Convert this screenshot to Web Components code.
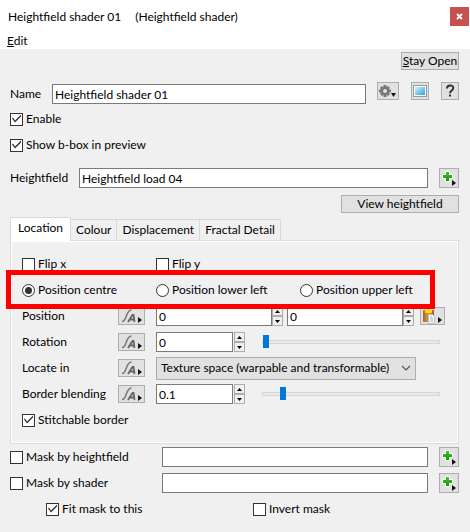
<!DOCTYPE html>
<html lang="en">
<head>
<meta charset="utf-8">
<title>Heightfield shader 01</title>
<style>
	body {
		margin: 0;
		background: #f0f0f0;
		color: #000;
		font: 12px/16px Lato, "Open Sans", sans-serif;
	}
</style>
</head>
<body>

<shader-window>
	<span slot="title">Heightfield shader 01</span>
	<span slot="type">(Heightfield shader)</span>

	<form-row class="end top"><push-button accesskey-first>Stay Open</push-button></form-row>
	<form-row class="name">
		<text-field label="Name" value="Heightfield shader 01" style="--label:42px"></text-field>
		<icon-button icon="gear" label="Options" style="--w:22px"></icon-button>
		<icon-button icon="preview" label="Preview" style="--w:18px"></icon-button>
		<icon-button icon="help" label="Help" style="--w:18px"></icon-button>
	</form-row>
	<form-row><check-box checked>Enable</check-box></form-row>
	<form-row><check-box checked>Show b-box in preview</check-box></form-row>
	<form-row class="node">
		<text-field label="Heightfield" value="Heightfield load 04" style="--label:69px"></text-field>
		<icon-button icon="plus" label="Assign heightfield" style="--w:20px;--h:20px"></icon-button>
	</form-row>
	<form-row class="end"><push-button style="--w:118px">View heightfield</push-button></form-row>

	<tab-panel tabs="Location,Colour,Displacement,Fractal Detail">
		<form-row class="cols"><check-box>Flip x</check-box><check-box>Flip y</check-box></form-row>
		<radio-row options="Position centre,Position lower left,Position upper left" selected="0"></radio-row>
		<param-row label="Position" kind="vector" value="0"></param-row>
		<param-row label="Rotation" kind="slider" value="0"></param-row>
		<param-row label="Locate in" kind="choice" value="Texture space (warpable and transformable)"></param-row>
		<param-row label="Border blending" kind="slider" value="0.1"></param-row>
		<form-row><check-box checked>Stitchable border</check-box></form-row>
	</tab-panel>

	<mask-row label="Mask by heightfield"></mask-row>
	<mask-row label="Mask by shader"></mask-row>
	<form-row class="fit"><check-box checked>Fit mask to this</check-box><check-box>Invert mask</check-box></form-row>
</shader-window>

<script>
const ARROW = '<path d="M0 0L4 3L0 6Z" fill="#111"/>';

const ICONS = {
	gear: `<svg width="20" height="16" viewBox="0 0 20 16">
		<g transform="translate(7 8)" stroke="#777" stroke-width="3">
			<path d="M0-6V6M-6 0H6M-4-4L4 4M4-4L-4 4"/>
			<circle r="3" fill="#e1e1e1" stroke-width="2"/>
		</g>
		<path d="M13 10H18L15.500 14Z" fill="#111"/></svg>`,
	preview: `<svg width="16" height="16" viewBox="0 0 16 16">
		<defs><linearGradient id="g" x1="0" y1="0" x2="1" y2="1"><stop offset="0" stop-color="#d3f1fc"/><stop offset="1" stop-color="#2da5dc"/></linearGradient></defs>
		<rect x="1.500" y="2.500" width="13" height="11" fill="#fff" stroke="#999"/>
		<rect x="3" y="4" width="10" height="8" fill="url(#g)"/></svg>`,
	help: `<svg width="16" height="16" viewBox="0 0 16 16">
		<path d="M5 5.500C5 1.500 11.300 1.500 11.300 5C11.300 7.500 8 7.500 8 10.200" fill="none" stroke="#333" stroke-width="2"/>
		<rect x="7" y="11.500" width="2" height="2" fill="#333"/></svg>`,
	plus: `<svg width="18" height="18" viewBox="0 0 18 18">
		<defs><linearGradient id="g" x1="0" y1="0" x2="0" y2="1"><stop offset="0" stop-color="#41c52c"/><stop offset="1" stop-color="#159407"/></linearGradient></defs>
		<path d="M6 3H9V6H12V9H9V12H6V9H3V6H6Z" fill="url(#g)" stroke="#fff" stroke-width="2" paint-order="stroke"/>
		<g transform="translate(12 11)">${ARROW}</g></svg>`,
	anim: `<svg width="25" height="16" viewBox="0 0 25 16">
		<path d="M3 13.500C8 13.500 6.500 2 12.500 2" fill="none" stroke="#777" stroke-width="1.500"/>
		<path d="M9 14L13.500 7H14.500L15.500 14M11 11.500H15" fill="none" stroke="#666" stroke-width="1.800"/>
		<g transform="translate(19 9)">${ARROW}</g></svg>`,
	paste: `<svg width="23" height="16" viewBox="0 0 23 16">
		<defs><linearGradient id="g" x1="0" y1="0" x2="1" y2="0"><stop offset="0" stop-color="#a76520"/><stop offset=".5" stop-color="#d99a4b"/><stop offset="1" stop-color="#9a5716"/></linearGradient></defs>
		<rect x="2" y="2" width="11" height="12" rx="1" fill="url(#g)"/>
		<path d="M4 2H6V0H9V2H11V5H4Z" fill="#fcd514"/>
		<path d="M7.500 6.500H11.500L13.500 8.500V15.500H7.500Z" fill="#fafafa" stroke="#bbb"/>
		<path d="M9 9H11M9 11H12M9 13H12" stroke="#aaa"/>
		<g transform="translate(17 9)">${ARROW}</g></svg>`
};

class BaseElement extends HTMLElement {

	constructor() {
		super();
		this.root = this.attachShadow({mode: 'open'});
	}

	connectedCallback() {
		this.root.innerHTML = `
		<style>
			:host { display: block; }
			* { box-sizing: border-box; }
			button, input, select { font: inherit; color: inherit; margin: 0; border-radius: 0; }
			${this.css()}
		</style>
		${this.html()}`;
	}

	attr(name) {
		return this.getAttribute(name) || '';
	}
}

class ShaderWindow extends BaseElement {
	css() {
		return `
		header { background: #fff; }
		.title { display: flex; align-items: center; gap: 14px; height: 33px; padding: 0 1px 0 8px; }
		.title button {
			width: 19px; height: 19px; padding: 0; margin-left: auto;
			border: 0; background: #c75050; color: #fff; display: grid; place-items: center;
		}
		nav { height: 16px; padding-left: 7px; }
		nav button { display: block; height: 16px; border: 0; padding: 0; background: none; }
		main { padding: 3px 11px 10px 10px; }`;
	}
	html() {
		return `
		<header>
			<div class="title">
				<slot name="title"></slot>
				<slot name="type"></slot>
				<button aria-label="Close"><svg width="7" height="7" viewBox="0 0 7 7"><path d="M1 1L6 6M6 1L1 6" stroke="#fff" stroke-width="1.800"/></svg></button>
			</div>
			<nav><button><u>E</u>dit</button></nav>
		</header>
		<main><slot></slot></main>`;
	}
}
customElements.define('shader-window', ShaderWindow);

class FormRow extends BaseElement {
	css() {
		return `
		:host { display: flex; align-items: center; height: 26px; }
		:host(.end) { justify-content: flex-end; align-items: flex-start; height: 22px; }
		:host(.top) { height: 30px; }
		:host(.name) { gap: 12px; height: 24px; align-items: flex-start; }
		:host(.node) { gap: 11px; height: 30px; align-items: flex-end; margin-bottom: 7px; }
		:host(.cols) { display: grid; grid-template-columns: 134px 144px 1fr; }
		:host(.fit) { display: grid; grid-template-columns: 207px 1fr; padding-left: 36px; }`;
	}
	html() {
		return '<slot></slot>';
	}
}
customElements.define('form-row', FormRow);

class PushButton extends BaseElement {
	css() {
		return `
		button {
			display: block; height: 18px; width: var(--w, 58px); padding: 0;
			border: 1px solid #adadad; background: #e1e1e1; line-height: 16px; white-space: nowrap;
		}`;
	}
	html() {
		const text = this.textContent;
		if (this.hasAttribute('accesskey-first')) {
			return `<button><u>${text[0]}</u>${text.slice(1)}</button>`;
		}
		return `<button>${text}</button>`;
	}
}
customElements.define('push-button', PushButton);

class IconButton extends BaseElement {
	css() {
		return `
		:host { flex: none; }
		button {
			display: grid; place-items: center; width: var(--w, 27px); height: var(--h, 18px);
			padding: 0; border: 1px solid #adadad; background: #e1e1e1;
		}
		svg { display: block; }`;
	}
	html() {
		return `<button aria-label="${this.attr('label')}">${ICONS[this.attr('icon')]}</button>`;
	}
}
customElements.define('icon-button', IconButton);

class TextField extends BaseElement {
	css() {
		return `
		:host { flex: 1; min-width: 0; }
		label { display: grid; grid-template-columns: var(--label) 1fr; align-items: center; }
		input { min-width: 0; height: 20px; padding: 0 2px; border: 1px solid #7a7a7a; background: #fff; }
		:host([label=Name]) { padding-top: 2px; margin-right: -1px; }`;
	}
	html() {
		return `<label>${this.attr('label')}<input type="text" value="${this.attr('value')}"></label>`;
	}
}
customElements.define('text-field', TextField);

/* shared by the tick boxes, wherever they are drawn */
const CHECK_CSS = `
	label { display: inline-flex; align-items: center; gap: 3px; white-space: nowrap; }
	input[type=checkbox] {
		appearance: none; flex: none; display: grid; place-items: center;
		width: 13px; height: 13px; border: 1px solid #333; background: #fff;
	}
	input[type=checkbox]:checked::before {
		content: ""; width: 11px; height: 11px; background: #333;
		clip-path: polygon(1px 5px, 2px 4px, 4px 7px, 10px 1px, 10px 3px, 4px 9px);
	}`;

class CheckBox extends BaseElement {
	css() {
		return CHECK_CSS + ':host { display: flex; }';
	}
	html() {
		const checked = this.hasAttribute('checked') ? 'checked' : '';
		return `<label><input type="checkbox" ${checked}><slot></slot></label>`;
	}
}
customElements.define('check-box', CheckBox);

class RadioRow extends BaseElement {
	css() {
		return `
		:host { display: grid; grid-template-columns: 134px 144px 1fr; align-items: center; height: 26px; position: relative; z-index: 1; }
		label { display: flex; align-items: center; gap: 3px; white-space: nowrap; }
		input {
			appearance: none; flex: none; display: grid; place-items: center;
			width: 13px; height: 13px; border: 1px solid #333; border-radius: 50%; background: #fff;
		}
		input:checked::before { content: ""; width: 7px; height: 7px; border-radius: 50%; background: #333; }
		.highlight { position: absolute; inset: -7px 10px -6px -16px; border: 5px solid #f00; pointer-events: none; }`;
	}
	html() {
		const selected = Number(this.attr('selected'));
		return this.attr('options').split(',').map((text, i) =>
			`<label><input type="radio" name="position" ${i === selected ? 'checked' : ''}>${text}</label>`
		).join('') + '<div class="highlight"></div>';
	}
}
customElements.define('radio-row', RadioRow);

class ParamRow extends BaseElement {
	css() {
		return `
		:host { display: grid; grid-template-columns: 96px 27px 1fr; align-items: center; height: 26px; }
		.value { display: flex; align-items: center; padding-left: 11px; min-width: 0; }
		.value > input[type=text] { height: 20px; width: 77px; min-width: 0; padding: 0 2px; border: 1px solid #7a7a7a; background: #fff; }
		.vector > input[type=text] { flex: 1; }
		.spin { display: grid; flex: none; width: 11px; height: 20px; margin-left: 1px; }
		.spin button { display: grid; place-items: center; padding: 0; height: 10px; border: 1px solid #adadad; background: #f0f0f0; }
		.spin svg { display: block; }
		.vector .spin { margin-left: 0; }
		.vector .spin + input { margin-left: 4px; }
		.vector icon-button { margin-left: 6px; --w: 25px; }
		input[type=range] { appearance: none; flex: 1; min-width: 0; height: 13px; margin: 0 5px 0 17px; background: none; }
		input::-webkit-slider-runnable-track { height: 4px; border: 1px solid #d6d6d6; background: #e7eaea; }
		input::-webkit-slider-thumb { appearance: none; width: 6px; height: 13px; margin-top: -6px; background: #0078d7; }
		select {
			appearance: none; width: 260px; height: 23px; padding: 0 20px 0 4px;
			border: 1px solid #adadad; background: #e1e1e1;
		}
		.pick { display: grid; grid-template-columns: auto; align-items: center; justify-items: end; }
		.pick > * { grid-area: 1 / 1; }
		.pick svg { margin-right: 5px; pointer-events: none; }`;
	}
	spin() {
		const up = '<svg width="5" height="3" viewBox="0 0 5 3"><path d="M0 3L2.500 0L5 3Z"/></svg>';
		const down = '<svg width="5" height="3" viewBox="0 0 5 3"><path d="M0 0L2.500 3L5 0Z"/></svg>';
		return `<div class="spin"><button aria-label="Increase">${up}</button><button aria-label="Decrease">${down}</button></div>`;
	}
	field() {
		const label = this.attr('label');
		const value = this.attr('value');
		switch (this.attr('kind')) {
			case 'vector':
				return `<input type="text" id="v" value="${value}">${this.spin()}
					<input type="text" aria-label="${label} y" value="${value}">${this.spin()}
					<icon-button icon="paste" label="Paste"></icon-button>`;
			case 'choice':
				return `<div class="pick"><select id="v"><option>${value}</option></select>
					<svg width="10" height="6" viewBox="0 0 10 6"><path d="M1 1L5 5L9 1" fill="none" stroke="#555" stroke-width="1.200"/></svg></div>`;
			default:
				return `<input type="text" id="v" value="${value}">${this.spin()}
					<input type="range" aria-label="${label}" min="0" max="1" step="0.01" value="${value}">`;
		}
	}
	html() {
		return `
		<label for="v">${this.attr('label')}</label>
		<icon-button icon="anim" label="Animation"></icon-button>
		<div class="value ${this.attr('kind')}">${this.field()}</div>`;
	}
}
customElements.define('param-row', ParamRow);

class MaskRow extends BaseElement {
	css() {
		return CHECK_CSS + `
		:host { display: grid; grid-template-columns: 152px 1fr 20px; align-items: center; height: 26px; }
		input[type=text] { height: 20px; min-width: 0; margin-right: 11px; padding: 0 2px; border: 1px solid #7a7a7a; background: #fff; }`;
	}
	html() {
		const label = this.attr('label');
		return `
		<label><input type="checkbox">${label}</label>
		<input type="text" aria-label="${label}">
		<icon-button icon="plus" label="Assign" style="--w:20px;--h:20px"></icon-button>`;
	}
}
customElements.define('mask-row', MaskRow);

class TabPanel extends BaseElement {
	css() {
		return `
		.tabs { display: flex; align-items: flex-end; height: 23px; }
		.tabs button {
			height: 21px; padding: 0 5px; border: 1px solid #d9d9d9; border-width: 1px 1px 0 0;
			background: #f0f0f0; white-space: nowrap;
		}
		.tabs button[aria-selected=true] { height: 24px; padding: 0 7px 3px; border-left-width: 1px; background: #fff; margin-bottom: -1px; z-index: 1; }
		.panel { border: 1px solid #dcdcdc; box-shadow: inset 0 0 0 1px #fff; padding: 10px 13px 10px 11px; }`;
	}
	html() {
		const tabs = this.attr('tabs').split(',').map((text, i) =>
			`<button role="tab" aria-selected="${i === 0}">${text}</button>`
		).join('');
		return `<div class="tabs" role="tablist">${tabs}</div><div class="panel" role="tabpanel"><slot></slot></div>`;
	}
}
customElements.define('tab-panel', TabPanel);
</script>
</body>
</html>
